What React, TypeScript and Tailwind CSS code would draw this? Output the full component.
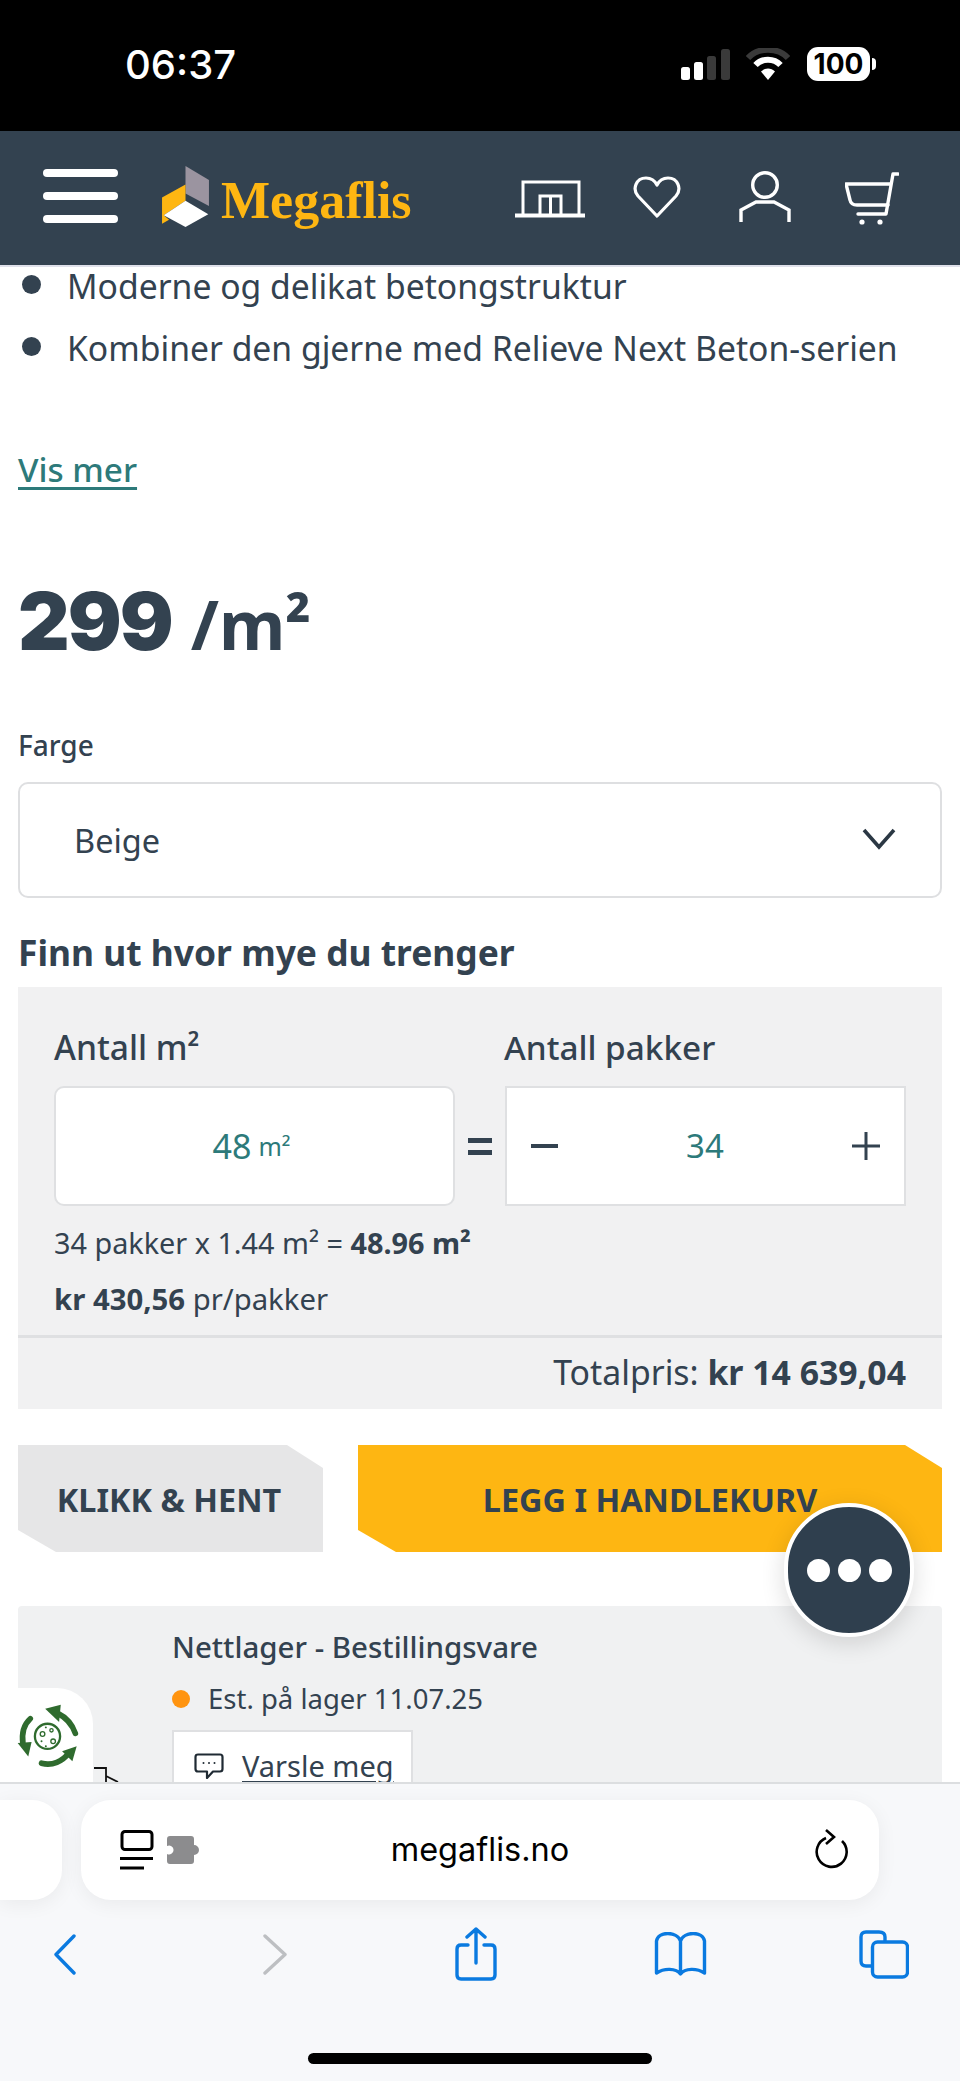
import React from "react";

const ink = "text-[#334250]";

function Signal() {
  return (
    <svg width="49" height="31" viewBox="0 0 49 31" className="shrink-0">
      <rect x="0" y="18" width="9" height="13" rx="2.5" fill="#fff" />
      <rect x="13" y="13" width="9" height="18" rx="2.5" fill="#fff" />
      <rect x="26" y="7" width="9" height="24" rx="2.5" fill="#3a3a3a" />
      <rect x="40" y="0" width="9" height="31" rx="2.5" fill="#3a3a3a" />
    </svg>
  );
}

function Wifi() {
  return (
    <svg width="44" height="32" viewBox="0 0 44 32" className="shrink-0">
      <path d="M2 10 C12 -1 32 -1 42 10" fill="none" stroke="#3a3a3a" strokeWidth="6" />
      <path d="M9.5 17 C16 10 28 10 34.5 17" fill="none" stroke="#fff" strokeWidth="6" />
      <path d="M15 23.5 C19 19.5 25 19.5 29 23.5 L22 32 Z" fill="#fff" />
    </svg>
  );
}

function Burger() {
  return (
    <div className="flex w-[75px] shrink-0 flex-col gap-[15px]">
      <div className="h-[8px] rounded-full bg-white" />
      <div className="h-[8px] rounded-full bg-white" />
      <div className="h-[8px] rounded-full bg-white" />
    </div>
  );
}

function LogoMark() {
  return (
    <svg width="47" height="61" viewBox="425 78 140 182" className="shrink-0">
      <polygon points="495,78 565,120 565,197 495,160" fill="#9b94a0" />
      <polygon points="425,172 495,133 495,182 430,225 446,238 425,250" fill="#feb612" />
      <polygon points="495,182 563,222 495,260 430,225" fill="#fff" />
    </svg>
  );
}

function StoreIcon() {
  return (
    <svg width="70" height="38" viewBox="0 0 70 38" fill="none" stroke="#fff" strokeWidth="3" className="shrink-0">
      <path d="M0 35.5 H70" strokeWidth="4" />
      <path d="M8 35 V2 H64 V35" />
      <path d="M25 35 V16 H46 V35 M35.5 16 V35" />
    </svg>
  );
}

function HeartIcon() {
  return (
    <svg width="48" height="43" viewBox="0 0 48 43" fill="none" stroke="#fff" strokeWidth="3.2" className="shrink-0">
      <path d="M24 40 L5 20 C-1 13 3 2 13 2 C18 2 22 5 24 9 C26 5 30 2 35 2 C45 2 49 13 43 20 Z" strokeLinejoin="round" />
    </svg>
  );
}

function UserIcon() {
  return (
    <svg width="52" height="51" viewBox="0 0 52 51" fill="none" stroke="#fff" strokeWidth="3.4" className="shrink-0">
      <circle cx="26" cy="14" r="12.3" />
      <path d="M2 51 V39 L17 31 H35 L50 39 V51" />
    </svg>
  );
}

function CartIcon() {
  return (
    <svg width="54" height="54" viewBox="0 0 54 54" fill="none" stroke="#fff" strokeWidth="3.4" strokeLinecap="round" strokeLinejoin="round" className="shrink-0">
      <path d="M53 2 H48 L41 42 H13" />
      <path d="M1 12 H45 M1 12 L5 28 Q6 33 12 33 H43" />
      <circle cx="17" cy="50" r="2.6" fill="#fff" stroke="none" />
      <circle cx="35" cy="50" r="2.6" fill="#fff" stroke="none" />
    </svg>
  );
}

function Recycle() {
  return (
    <svg width="63" height="65" viewBox="45 95 190 195" fill="none" className="shrink-0">
      <g stroke="#2f6b2e" strokeWidth="17" strokeLinecap="round" fill="none">
        <path d="M170 125 C200 140 215 160 224 186" />
        <path d="M88 142 C68 160 62 190 66 218" />
        <path d="M122 276 C155 285 185 270 204 246" />
      </g>
      <g fill="#2f6b2e">
        <polygon points="133,112 180,100 175,152" />
        <polygon points="50,215 92,212 82,256" />
        <polygon points="184,240 228,225 215,270" />
      </g>
      <circle cx="140" cy="195" r="38" stroke="#2f6b2e" strokeWidth="7" />
      <g stroke="#2f6b2e" strokeWidth="4">
        <circle cx="125" cy="188" r="7" />
        <circle cx="152" cy="177" r="5" />
        <circle cx="157" cy="210" r="7" />
      </g>
      <circle cx="122" cy="210" r="3" fill="#2f6b2e" />
      <circle cx="135" cy="168" r="3" fill="#2f6b2e" />
      <circle cx="135" cy="225" r="3" fill="#2f6b2e" />
    </svg>
  );
}

function Comment() {
  return (
    <svg width="30" height="26" viewBox="0 0 30 26" fill="none" stroke="#1f2a33" strokeWidth="2.2" strokeLinejoin="round" className="shrink-0">
      <path d="M4 1.5 H26 Q28.5 1.5 28.5 4 V16 Q28.5 18.5 26 18.5 H19 L13 25 V18.5 H4 Q1.5 18.5 1.5 16 V4 Q1.5 1.5 4 1.5 Z" />
      <circle cx="9.5" cy="10" r="1" fill="#1f2a33" stroke="none" />
      <circle cx="15" cy="10" r="1" fill="#1f2a33" stroke="none" />
      <circle cx="20.5" cy="10" r="1" fill="#1f2a33" stroke="none" />
    </svg>
  );
}

function Bullet({ children }: { children: React.ReactNode }) {
  return (
    <li className="flex h-[38px] items-center">
      <span className="mb-[4px] ml-[22px] h-[19px] w-[19px] shrink-0 rounded-full bg-[#334250]" />
      <span className="ml-[26px] whitespace-nowrap text-[33.7px] leading-[38px]">{children}</span>
    </li>
  );
}

export default function App() {
  return (
    <div
      className={`relative flex h-[2081px] w-[960px] flex-col overflow-hidden bg-white ${ink}`}
      style={{ fontFamily: '"Noto Sans", sans-serif' }}
    >
      <div className="flex h-[131px] shrink-0 items-start justify-between bg-black pl-[125px] pr-[84px] text-white">
        <span className="mt-[42px] text-[40px] font-medium leading-[46px] font-['Inter',sans-serif]">06:37</span>
        <div className="mt-[47px] flex items-center">
          <Signal />
          <div className="ml-[16px]"><Wifi /></div>
          <div className="ml-[17px] flex h-[34px] w-[63px] items-center justify-center rounded-[11px] bg-white text-[28px] font-bold leading-none text-black font-['Inter',sans-serif]">100</div>
          <div className="ml-[2px] h-[12px] w-[4px] rounded-r-full bg-white" />
        </div>
      </div>

      <header className="flex h-[134px] shrink-0 items-center bg-[#334250] pl-[43px]">
        <div className="mt-[-4px]"><Burger /></div>
        <div className="ml-[44px] mt-[-4px]"><LogoMark /></div>
        <span className="ml-[12px] mt-[6px] w-[192px] whitespace-nowrap text-[52px] font-bold leading-none text-[#feb612] font-['Liberation_Serif',serif]">Megaflis</span>
        <div className="ml-[102px] mt-[2px]"><StoreIcon /></div>
        <div className="ml-[48px] mt-[-2px]"><HeartIcon /></div>
        <div className="ml-[58px] mt-[-3px]"><UserIcon /></div>
        <div className="ml-[54px] mt-[1px]"><CartIcon /></div>
      </header>
      <div className="h-[2px] shrink-0 bg-[#dfe0ea]" />

      <main className="min-h-0 flex-1 overflow-hidden">
        <ul className="flex flex-col gap-[24px]">
          <Bullet>Moderne og delikat betongstruktur</Bullet>
          <Bullet>Kombiner den gjerne med Relieve Next Beton-serien</Bullet>
        </ul>

        <a className="ml-[18px] mt-[83px] block text-[33.3px] font-medium leading-[38px] text-[#2d7a7a] underline underline-offset-[5px]">Vis mer</a>

        <div className="ml-[18px] mt-[93px] flex h-[80px] items-baseline leading-[80px]">
          <span className="text-[80px] font-black tracking-[-2px] font-['Inter',sans-serif]">299</span>
          <span className="ml-[19px] text-[68px] font-bold">/m²</span>
        </div>

        <div className="ml-[18px] mt-[65px] text-[28px] font-medium leading-[38px]">Farge</div>

        <div className="mx-[18px] mt-[18px] flex h-[116px] items-center justify-between rounded-[10px] border-2 border-[#dedfe1] bg-white pl-[54px] pr-[44px]">
          <span className="mt-[2px] text-[32.5px] leading-[38px]">Beige</span>
          <svg width="34" height="22" viewBox="0 0 34 22" fill="none" stroke="#2b3844" strokeWidth="3.6" className="mb-[3px]">
            <path d="M2 2 L17 19 L32 2" />
          </svg>
        </div>

        <h2 className="ml-[18px] mt-[32px] text-[35.4px] font-bold leading-[44px]">Finn ut hvor mye du trenger</h2>

        <section className="mx-[18px] mt-[13px] bg-[#f1f1f2] pt-[40px]">
          <div className="flex px-[36px]">
            <div className="w-[450px] text-[33.5px] font-medium leading-[40px]">Antall m²</div>
            <div className="text-[33.3px] font-medium leading-[40px]">Antall pakker</div>
          </div>
          <div className="mt-[19px] flex h-[120px] px-[36px]">
            <div className="flex w-[401px] items-center justify-center rounded-[10px] border-2 border-[#dfe0e2] bg-white pr-[6px] text-[#2d7a7a]">
              <span className="text-[34px] leading-[38px]">48</span>
              <span className="ml-[7px] text-[25px] leading-[38px]">m²</span>
            </div>
            <div className="flex w-[50px] items-center justify-center">
              <div className="flex w-[24px] flex-col gap-[7px]">
                <div className="h-[5px] bg-[#334250]" />
                <div className="h-[5px] bg-[#334250]" />
              </div>
            </div>
            <div className="flex w-[401px] items-center justify-between border-2 border-[#dfe0e2] bg-white pl-[24px] pr-[24px] text-[#2d7a7a]">
              <div className="h-[4px] w-[27px] bg-[#334250]" />
              <span className="text-[33px] leading-[38px]">34</span>
              <svg width="28" height="28" viewBox="0 0 28 28" stroke="#334250" strokeWidth="3">
                <path d="M0 14 H28 M14 0 V28" />
              </svg>
            </div>
          </div>
          <div className="ml-[36px] mt-[18px] text-[28.8px] leading-[38px]">
            34 pakker x 1.44 m² = <b className="font-bold">48.96 m²</b>
          </div>
          <div className="ml-[36px] mt-[18px] text-[29.3px] leading-[38px]">
            <b className="font-bold">kr 430,56</b> pr/pakker
          </div>
          <div className="mt-[17px] flex h-[74px] items-center justify-end border-t-[3px] border-[#dfe0e2] pr-[36px] pb-[4px] text-[33.8px] leading-[40px]">
            Totalpris:&nbsp;<b className="font-bold">kr 14 639,04</b>
          </div>
        </section>

        <div className="mx-[18px] mt-[36px] flex h-[107px] justify-between">
          <button className="flex w-[305px] items-center justify-center bg-[#e6e6e7] pt-[2px] pr-[3px] text-[32.4px] font-bold [clip-path:polygon(0_0,269px_0,100%_23px,100%_100%,38px_100%,0_85px)]">
            KLIKK &amp; HENT
          </button>
          <button className="flex w-[584px] items-center justify-center bg-[#feb612] pt-[2px] text-[32.4px] font-bold [clip-path:polygon(0_0,547px_0,100%_23px,100%_100%,38px_100%,0_85px)]">
            LEGG I HANDLEKURV
          </button>
        </div>

        <section className="mx-[18px] mt-[54px] h-[300px] rounded-t-[4px] bg-[#f0f1f2] pl-[154px] pt-[22px]">
          <div className="text-[29.5px] font-medium leading-[38px]">Nettlager - Bestillingsvare</div>
          <div className="mt-[14px] flex h-[38px] items-center">
            <span className="h-[18px] w-[18px] rounded-full bg-[#ff9410]" />
            <span className="ml-[18px] text-[27.5px] leading-[38px]">Est. på lager 11.07.25</span>
          </div>
          <div className="mt-[12px] flex h-[72px] w-[241px] items-center border-2 border-[#dfe0e2] bg-white pl-[20px]">
            <Comment />
            <span className="ml-[18px] text-[29px] leading-[38px] underline underline-offset-[4px]">Varsle meg</span>
          </div>
        </section>
      </main>

      <footer className="relative h-[299px] shrink-0 border-t-2 border-[#dcdee0] bg-[#f7f8fa]">
        <div className="mt-[16px] flex h-[100px] gap-[19px]">
          <div className="h-full w-[62px] shrink-0 rounded-r-[30px] bg-white shadow-[0_4px_20px_rgba(0,0,0,0.06)]" />
          <div className="flex h-full w-[798px] shrink-0 items-center rounded-[30px] bg-white pl-[39px] pr-[31px] shadow-[0_4px_20px_rgba(0,0,0,0.06)]">
            <svg width="34" height="40" viewBox="0 0 34 40" fill="none" stroke="#000" strokeWidth="3" className="shrink-0">
              <rect x="2" y="1.5" width="30" height="18" rx="3" />
              <path d="M0 28.5 H33 M0 38 H24" />
            </svg>
            <svg width="37" height="28" viewBox="0 0 37 28" fill="#8c8c8e" className="ml-[13px] shrink-0">
              <path d="M3 0 H24 Q27 0 27 3 V9 A5 5 0 1 1 27 19 V25 Q27 28 24 28 H3 Q0 28 0 25 V18 A4.5 4.5 0 1 0 0 10 V3 Q0 0 3 0 Z" />
            </svg>
            <span className="flex-1 pr-[60px] text-center text-[32.5px] leading-[40px] text-black font-['Inter',sans-serif]">megaflis.no</span>
            <svg width="34" height="40" viewBox="0 0 34 40" fill="none" stroke="#000" strokeWidth="2.6" className="mb-[2px] ml-[-2px] shrink-0">
              <path d="M12 9 A15 15 0 1 0 28 12" />
              <path d="M12 1 L20 8 L12 15" />
            </svg>
          </div>
        </div>

        <div className="mt-[27px] flex items-center pl-[54px]">
          <svg width="22" height="41" viewBox="0 0 22 41" fill="none" stroke="#0a7ae0" strokeWidth="3.4" strokeLinecap="round" strokeLinejoin="round" className="shrink-0">
            <path d="M20 2 L2 20.5 L20 39" />
          </svg>
          <svg width="24" height="41" viewBox="0 0 24 41" fill="none" stroke="#bdbfc2" strokeWidth="3.4" strokeLinecap="round" strokeLinejoin="round" className="ml-[187px] shrink-0">
            <path d="M2 2 L22 20.5 L2 39" />
          </svg>
          <svg width="42" height="54" viewBox="0 0 42 54" fill="none" stroke="#0a7ae0" strokeWidth="3.4" strokeLinecap="round" strokeLinejoin="round" className="ml-[168px] shrink-0">
            <path d="M13 18 H6 Q2 18 2 22 V48 Q2 52 6 52 H36 Q40 52 40 48 V22 Q40 18 36 18 H29" />
            <path d="M21 36 V2 M12 10 L21 2 L30 10" />
          </svg>
          <svg width="53" height="44" viewBox="0 0 53 44" fill="none" stroke="#0a7ae0" strokeWidth="3.4" strokeLinejoin="round" className="ml-[157px] shrink-0">
            <path d="M26.5 9 C23 -1 4 -1 2.5 9 V41 C10 36 22 36 26.5 42 C31 36 43 36 50.5 41 V9 C49 -1 30 -1 26.5 9 Z M26.5 9 V42" />
          </svg>
          <svg width="50" height="49" viewBox="0 0 50 49" fill="none" stroke="#0a7ae0" strokeWidth="3.4" className="ml-[152px] shrink-0">
            <path d="M12 36 H7 Q2 36 2 31 V7 Q2 2 7 2 H20 Q26 2 26 7 V12" />
            <rect x="13.5" y="12" width="35" height="35" rx="5" />
          </svg>
        </div>

        <div className="absolute left-[308px] top-[269px] h-[11px] w-[344px] rounded-full bg-black" />
      </footer>

      <div className="absolute left-0 top-[1688px] flex h-[94px] w-[93px] justify-start rounded-tr-[36px] bg-white pl-[16px] pt-[15px]">
        <Recycle />
      </div>
      <svg width="26" height="15" viewBox="0 0 26 15" fill="none" stroke="#111" strokeWidth="1.8" className="absolute left-[94px] top-[1767px]">
        <path d="M0 1 H12 V15 M12 9 L24 15" />
      </svg>

      <div className="absolute left-[784px] top-[1503px] flex h-[134px] w-[130px] items-center justify-center gap-[8px] rounded-full border-[4px] border-white bg-[#2f3f4e] shadow-[0_6px_24px_rgba(0,0,0,0.14)]">
        <span className="h-[23px] w-[23px] rounded-full bg-white" />
        <span className="h-[23px] w-[23px] rounded-full bg-white" />
        <span className="h-[23px] w-[23px] rounded-full bg-white" />
      </div>
    </div>
  );
}
